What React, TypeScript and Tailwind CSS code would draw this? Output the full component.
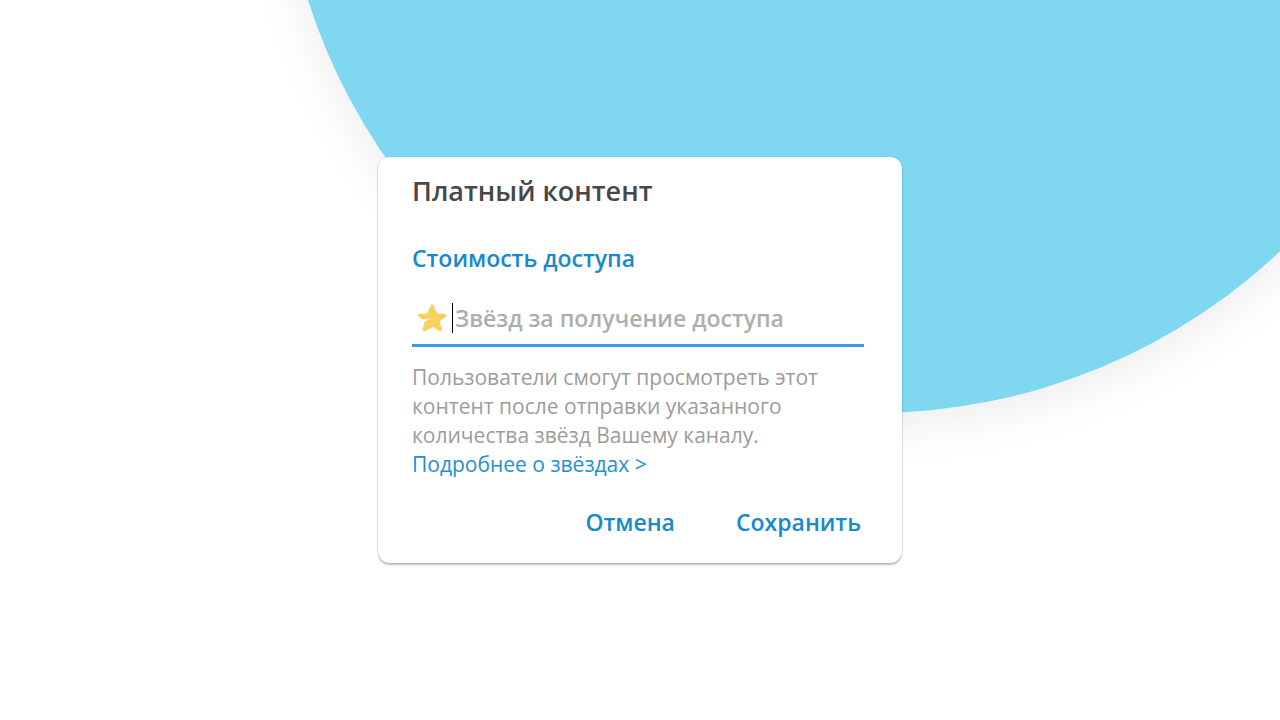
import React from 'react';

const StarIcon: React.FC = () => (
  <svg viewBox="0 0 30 28" className="w-[30px] h-7 shrink-0" aria-hidden="true">
    <path
      d="M13.6 1.8C14.3.2 16 .2 16.8 1.8L19.6 8.4C19.9 9.1 20.3 9.4 21 9.5L27.6 9.8C29.6 9.9 30.1 11.5 28.7 12.7L23.6 16.8C23 17.3 22.8 17.8 23 18.5L24.8 24.8C25.2 26.7 23.9 27.7 22.3 26.7L16.6 23.5C16 23.1 15.4 23.1 14.8 23.5L8.2 27C6.5 27.8 5.2 26.8 5.6 25L7.2 19.4C7.8 17.5 9.3 16.6 11.5 15.8L15 14.6L6.8 15.3C5.6 15.4 4.7 15 3.8 14.3L1.3 12.3C.2 11.3.5 10.1 2.1 9.9L9.3 9.5C10 9.4 10.4 9.1 10.7 8.4Z"
      fill="#f7d060"
    />
  </svg>
);

const App: React.FC = () => {
  return (
    <div className="relative min-h-screen w-full flex items-center justify-center overflow-hidden bg-white p-4 font-['Open_Sans','Noto_Sans',sans-serif]">
      {/* Background circle */}
      <div className="absolute left-[280px] top-[-773px] size-[1186px] rounded-full bg-[#80d8f0] shadow-[0_10px_50px_rgba(0,0,0,0.08)]" />

      <form className="relative w-full max-w-[524px] rounded-xl bg-white px-[34px] pt-4 pb-6 shadow-[0_2px_2px_rgba(0,0,0,0.25),0_0_2px_rgba(0,0,0,0.15)]">
        <h1 className="text-[27px] leading-9 font-semibold text-[#484848]">Платный контент</h1>

        <label htmlFor="price" className="mt-8 block text-[23px] leading-[34px] font-semibold text-[#168acd]">
          Стоимость доступа
        </label>

        {/* Price field */}
        <div className="mt-6 mr-1 flex h-12 items-center border-b-3 border-[#35a0dc] pb-2 pl-[5px]">
          <StarIcon />
          <span className="ml-[5px] h-[30px] w-px shrink-0 bg-black" />
          <input
            id="price"
            type="text"
            inputMode="numeric"
            placeholder="Звёзд за получение доступа"
            className="ml-0.5 min-w-0 flex-1 bg-transparent text-[23px] leading-8 font-semibold text-black outline-none placeholder:text-[#aeaeae]"
          />
        </div>

        <p className="mt-4 text-[21px] leading-[29px] text-[#9c9c9c]">
          Пользователи смогут просмотреть этот контент после отправки указанного количества звёзд Вашему каналу.{' '}
          <a href="#stars" className="block text-[#2490d0]">
            Подробнее о звёздах &gt;
          </a>
        </p>

        <div className="mt-[26px] mr-[7px] flex justify-end gap-[61px] text-[23px] leading-[34px] font-semibold text-[#168acd]">
          <button type="button">Отмена</button>
          <button type="button">Сохранить</button>
        </div>
      </form>
    </div>
  );
};

export default App;
